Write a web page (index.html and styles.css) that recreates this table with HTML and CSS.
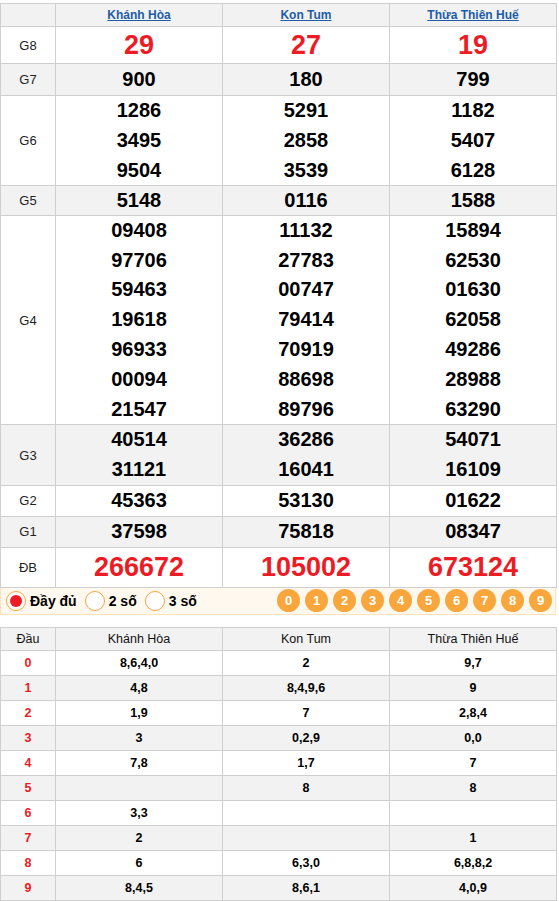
FILE: index.html
```html
<!DOCTYPE html>
<html lang="vi">
<head>
<meta charset="utf-8">
<title>XSMT</title>
<link rel="stylesheet" href="styles.css">
</head>
<body>
<div class="wrap">
<table class="kq">
  <colgroup><col class="c-lbl"><col class="c-p"><col class="c-p"><col class="c-p"></colgroup>
  <thead>
    <tr class="hd"><th></th><th><a href="#">Khánh Hòa</a></th><th><a href="#">Kon Tum</a></th><th><a href="#">Thừa Thiên Huế</a></th></tr>
  </thead>
  <tbody>
    <tr class="g8"><td class="lbl">G8</td><td class="red big">29</td><td class="red big">27</td><td class="red big">19</td></tr>
    <tr class="alt g7"><td class="lbl">G7</td><td class="num"><div>900</div></td><td class="num"><div>180</div></td><td class="num"><div>799</div></td></tr>
    <tr><td class="lbl">G6</td><td class="num"><div>1286</div><div>3495</div><div>9504</div></td><td class="num"><div>5291</div><div>2858</div><div>3539</div></td><td class="num"><div>1182</div><div>5407</div><div>6128</div></td></tr>
    <tr class="alt g5"><td class="lbl">G5</td><td class="num"><div>5148</div></td><td class="num"><div>0116</div></td><td class="num"><div>1588</div></td></tr>
    <tr><td class="lbl">G4</td>
      <td class="num"><div>09408</div><div>97706</div><div>59463</div><div>19618</div><div>96933</div><div>00094</div><div>21547</div></td>
      <td class="num"><div>11132</div><div>27783</div><div>00747</div><div>79414</div><div>70919</div><div>88698</div><div>89796</div></td>
      <td class="num"><div>15894</div><div>62530</div><div>01630</div><div>62058</div><div>49286</div><div>28988</div><div>63290</div></td></tr>
    <tr class="alt"><td class="lbl">G3</td><td class="num"><div>40514</div><div>31121</div></td><td class="num"><div>36286</div><div>16041</div></td><td class="num"><div>54071</div><div>16109</div></td></tr>
    <tr><td class="lbl">G2</td><td class="num"><div>45363</div></td><td class="num"><div>53130</div></td><td class="num"><div>01622</div></td></tr>
    <tr class="alt"><td class="lbl">G1</td><td class="num"><div>37598</div></td><td class="num"><div>75818</div></td><td class="num"><div>08347</div></td></tr>
    <tr class="db"><td class="lbl">ĐB</td><td class="red big">266672</td><td class="red big">105002</td><td class="red big">673124</td></tr>
  </tbody>
</table>

<div class="opts">
  <div class="radios">
    <label class="opt"><span class="radio on"></span>Đầy đủ</label>
    <label class="opt"><span class="radio"></span>2 số</label>
    <label class="opt"><span class="radio"></span>3 số</label>
  </div>
  <div class="balls">
    <span class="ball">0</span><span class="ball">1</span><span class="ball">2</span><span class="ball">3</span><span class="ball">4</span><span class="ball">5</span><span class="ball">6</span><span class="ball">7</span><span class="ball">8</span><span class="ball">9</span>
  </div>
</div>

<table class="lt">
  <colgroup><col class="c-lbl"><col class="c-p"><col class="c-p"><col class="c-p"></colgroup>
  <thead>
    <tr><th>Đầu</th><th>Khánh Hòa</th><th>Kon Tum</th><th>Thừa Thiên Huế</th></tr>
  </thead>
  <tbody>
    <tr><td class="d">0</td><td>8,6,4,0</td><td>2</td><td>9,7</td></tr>
    <tr class="alt"><td class="d">1</td><td>4,8</td><td>8,4,9,6</td><td>9</td></tr>
    <tr><td class="d">2</td><td>1,9</td><td>7</td><td>2,8,4</td></tr>
    <tr class="alt"><td class="d">3</td><td>3</td><td>0,2,9</td><td>0,0</td></tr>
    <tr><td class="d">4</td><td>7,8</td><td>1,7</td><td>7</td></tr>
    <tr class="alt"><td class="d">5</td><td></td><td>8</td><td>8</td></tr>
    <tr><td class="d">6</td><td>3,3</td><td></td><td></td></tr>
    <tr class="alt"><td class="d">7</td><td>2</td><td></td><td>1</td></tr>
    <tr><td class="d">8</td><td>6</td><td>6,3,0</td><td>6,8,8,2</td></tr>
    <tr class="alt"><td class="d">9</td><td>8,4,5</td><td>8,6,1</td><td>4,0,9</td></tr>
  </tbody>
</table>
</div>
</body>
</html>
```

FILE: styles.css
```css
html, body {
  margin: 0;
  padding: 0;
  background: #fff;
}
body {
  font-family: "Liberation Sans", Arial, sans-serif;
  color: #000;
}
.wrap {
  width: 556px;
  padding-top: 3px;
}
table {
  border-collapse: collapse;
  table-layout: fixed;
  width: 556px;
}
col.c-lbl { width: 55px; }
col.c-p { width: 167px; }
th, td {
  border: 1px solid #cfcfcf;
  padding: 0;
  text-align: center;
  vertical-align: middle;
}
tr.alt td, thead tr th {
  background: #f2f2f2;
}
.kq thead th {
  height: 22px;
  font-size: 12px;
  font-weight: bold;
}
.kq thead a {
  color: #1c5ca8;
  text-decoration: underline;
}
.lbl {
  font-size: 13px;
  color: #222;
}
.num {
  font-size: 20px;
  font-weight: bold;
  line-height: 29.8px;
}
.red {
  color: #ed1c24;
}
.big {
  font-weight: bold;
  font-size: 27px;
}
.g8 td { height: 36px; }
.g7 .num { line-height: 31px; }
.g5 .num { line-height: 28.5px; }
.db td { height: 39px; }

.opts {
  display: flex;
  align-items: center;
  justify-content: space-between;
  height: 26px;
  border: 1px solid #fde3bd;
  border-top: none;
  background: #fff8ee;
  padding: 0 3px 0 5px;
  margin-bottom: 12px;
}
.radios {
  display: flex;
  align-items: center;
}
.opt {
  display: flex;
  align-items: center;
  font-size: 14px;
  font-weight: bold;
  margin-right: 8px;
}
.radio {
  box-sizing: border-box;
  width: 20px;
  height: 20px;
  border: 1px solid #f7a53c;
  border-radius: 50%;
  background: #fff;
  margin-right: 4px;
  display: flex;
  align-items: center;
  justify-content: center;
}
.radio.on::after {
  content: "";
  width: 12px;
  height: 12px;
  border-radius: 50%;
  background: #ed1c24;
}
.balls {
  display: flex;
  gap: 5px;
}
.ball {
  width: 23px;
  height: 23px;
  border-radius: 50%;
  background: #f9a73d;
  color: #fff;
  font-size: 13px;
  font-weight: bold;
  display: flex;
  align-items: center;
  justify-content: center;
}

.lt th {
  height: 22px;
  font-size: 12.5px;
  font-weight: normal;
  color: #111;
}
.lt td {
  height: 24px;
  font-size: 12.5px;
  font-weight: bold;
}
.lt td.d {
  color: #ed1c24;
}
```
